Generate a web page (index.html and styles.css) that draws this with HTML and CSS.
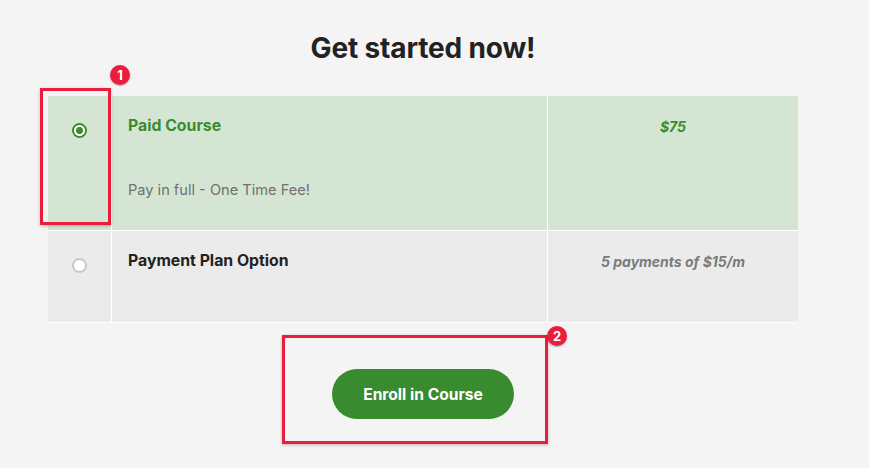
FILE: index.html
```html
<!DOCTYPE html>
<html>
<head>
<meta charset="utf-8">
<link rel="stylesheet" href="styles.css">
</head>
<body>
<div class="wrap">
  <h1 class="title">Get started now!</h1>
  <div class="plans">
    <div class="row row-active">
      <div class="cell cell-radio"><span class="radio radio-on"></span></div>
      <div class="cell cell-info">
        <div class="name name-active">Paid Course</div>
        <div class="desc">Pay in full - One Time Fee!</div>
      </div>
      <div class="cell cell-price"><span class="price price-active">$75</span></div>
    </div>
    <div class="row row-plain">
      <div class="cell cell-radio"><span class="radio"></span></div>
      <div class="cell cell-info">
        <div class="name">Payment Plan Option</div>
      </div>
      <div class="cell cell-price"><span class="price">5 payments of $15/m</span></div>
    </div>
    <div class="mark mark-1"></div>
    <span class="badge badge-1">1</span>
  </div>
  <div class="actions">
    <button class="enroll">Enroll in Course</button>
    <div class="mark mark-2"></div>
    <span class="badge badge-2">2</span>
  </div>
</div>
</body>
</html>
```

FILE: styles.css
```css
html, body {
  margin: 0;
  padding: 0;
  background: #f4f4f4;
  font-family: Inter, Lato, sans-serif;
}
.wrap {
  width: 750px;
  margin-left: 48px;
  padding-top: 29px;
}
.title {
  margin: 0;
  text-align: center;
  font-size: 28px;
  line-height: 38px;
  font-weight: 700;
  letter-spacing: -0.15px;
  color: #222;
}
.plans {
  position: relative;
  margin-top: 29px;
}
.row {
  display: grid;
  grid-template-columns: 63px 435px 250px;
  column-gap: 1px;
  border-bottom: 1px solid #fff;
  background: #fff;
}
.row-active .cell { background: #d4e6d3; height: 134px; }
.row-plain .cell { background: #ebebeb; height: 91px; }
.cell { box-sizing: border-box; padding-top: 20px; }
.cell-radio { display: flex; justify-content: center; padding-top: 27px; }
.radio {
  box-sizing: border-box;
  width: 15px;
  height: 15px;
  border-radius: 50%;
  border: 2px solid #c8c8c8;
  background: #fff;
}
.radio-on {
  border: 2px solid #3a8c2f;
  background: radial-gradient(circle, #3a8c2f 0 3.3px, #fff 3.8px);
}
.cell-info { padding-left: 16px; }
.name {
  font-size: 15.8px;
  line-height: 20px;
  font-weight: 700;
  color: #222;
}
.name-active { color: #3a8c2f; }
.desc {
  margin-top: 44px;
  font-size: 14.6px;
  line-height: 20px;
  color: #707070;
}
.cell-price { text-align: center; }
.price {
  font-size: 14px;
  line-height: 20px;
  font-weight: 700;
  font-style: italic;
  color: #7a7a7a;
}
.price-active { color: #3a8c2f; }
.actions {
  position: relative;
  display: flex;
  justify-content: center;
  padding-top: 46px;
  padding-bottom: 40px;
}
.enroll {
  width: 182px;
  height: 50px;
  border: 0;
  border-radius: 25px;
  background: #388b2e;
  color: #fff;
  font-family: Inter, Lato, sans-serif;
  font-size: 15.6px;
  font-weight: 700;
}
.mark {
  position: absolute;
  box-sizing: border-box;
  border: 3px solid #ec1c3c;
  box-shadow: 0 1px 3px rgba(0,0,0,0.25);
}
.mark-1 { left: -8px; top: -8px; width: 71px; height: 137px; }
.mark-2 { left: 234px; top: 12px; width: 266px; height: 109px; }
.badge {
  position: absolute;
  width: 20px;
  height: 20px;
  border-radius: 50%;
  background: #ec1c3c;
  color: #fff;
  font-size: 13px;
  font-weight: 700;
  line-height: 20px;
  text-align: center;
  box-shadow: 0 1px 2px rgba(0,0,0,0.3);
}
.badge-1 { left: 62px; top: -31px; }
.badge-2 { left: 499px; top: 3px; }
```
